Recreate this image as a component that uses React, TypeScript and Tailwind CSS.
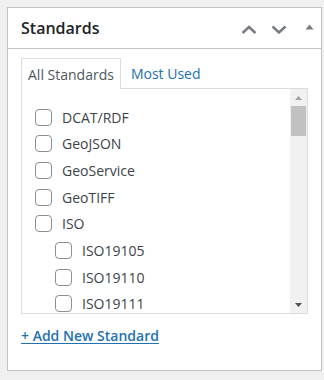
import React from 'react';

const items = [
  { name: 'DCAT/RDF', depth: 0 },
  { name: 'GeoJSON', depth: 0 },
  { name: 'GeoService', depth: 0 },
  { name: 'GeoTIFF', depth: 0 },
  { name: 'ISO', depth: 0 },
  { name: 'ISO19105', depth: 1 },
  { name: 'ISO19110', depth: 1 },
  { name: 'ISO19111', depth: 1 },
];

const App = () => {
  return (
    <div className="w-[324px] h-[380px] bg-[#f0f0f1] pt-[7px] pl-[7px] font-['Open_Sans',sans-serif]">
      <div className="w-[315px] h-[364px] bg-white border border-[#c3c4c7] flex flex-col">
        {/* header */}
        <div className="h-[41px] border-b border-[#c3c4c7] flex items-center justify-between pl-[13px] pr-[7px]">
          <h2 className="text-[16px] font-semibold text-[#1d2327]">Standards</h2>
          <div className="flex items-center">
            <svg width="16" height="9" viewBox="0 0 16 9" className="-ml-[2px] mt-[2px]">
              <path d="M1.5 8 L8 2 L14.5 8" fill="none" stroke="#787c82" strokeWidth="2.5" />
            </svg>
            <svg width="16" height="9" viewBox="0 0 16 9" className="ml-[14px] mt-[2px]">
              <path d="M1.5 1.5 L8 7.5 L14.5 1.5" fill="none" stroke="#787c82" strokeWidth="2.5" />
            </svg>
            <svg width="9" height="6" viewBox="0 0 9 6" className="ml-[18px] -mt-[3px]">
              <path d="M0.5 5.5 L4.5 0.5 L8.5 5.5 Z" fill="#787c82" />
            </svg>
          </div>
        </div>

        {/* body */}
        <div className="px-[13px] pt-[9px]">
          <ul className="flex">
            <li className="h-[31px] px-[6px] border border-b-0 border-[#dcdcde] bg-white -mb-px relative z-10 flex items-center text-[14px] text-[#50575e]">
              All Standards
            </li>
            <li className="h-[30px] px-[10px] flex items-center text-[14px] text-[#2271b1]">
              Most Used
            </li>
          </ul>
          <div className="h-[226px] border border-[#dcdcde] flex">
            <ul className="flex-1 overflow-hidden pt-[15px] pl-[13px]">
              {items.map((item) => (
                <li
                  key={item.name}
                  className={`h-[26.67px] flex items-center gap-[10px] ${item.depth ? 'pl-[20px]' : ''}`}
                >
                  <span className="w-[17px] h-[17px] rounded-[4px] border border-[#8c8f94] bg-white shrink-0" />
                  <span className="text-[14px] text-[#3c434a]">{item.name}</span>
                </li>
              ))}
            </ul>
            {/* scrollbar */}
            <div className="w-[17px] bg-[#f1f1f1] flex flex-col items-center">
              <div className="h-[17px] flex items-center justify-center">
                <svg width="7" height="4" viewBox="0 0 7 4">
                  <path d="M0 4 L3.5 0 L7 4 Z" fill="#a3a3a3" />
                </svg>
              </div>
              <div className="w-[15px] h-[30px] bg-[#c1c1c1]" />
              <div className="flex-1" />
              <div className="h-[17px] flex items-center justify-center">
                <svg width="7" height="4" viewBox="0 0 7 4">
                  <path d="M0 0 L3.5 4 L7 0 Z" fill="#505050" />
                </svg>
              </div>
            </div>
          </div>
          <a className="block mt-[11px] text-[14px] font-semibold text-[#2271b1] underline underline-offset-2">
            + Add New Standard
          </a>
        </div>
      </div>
    </div>
  );
};

export default App;
